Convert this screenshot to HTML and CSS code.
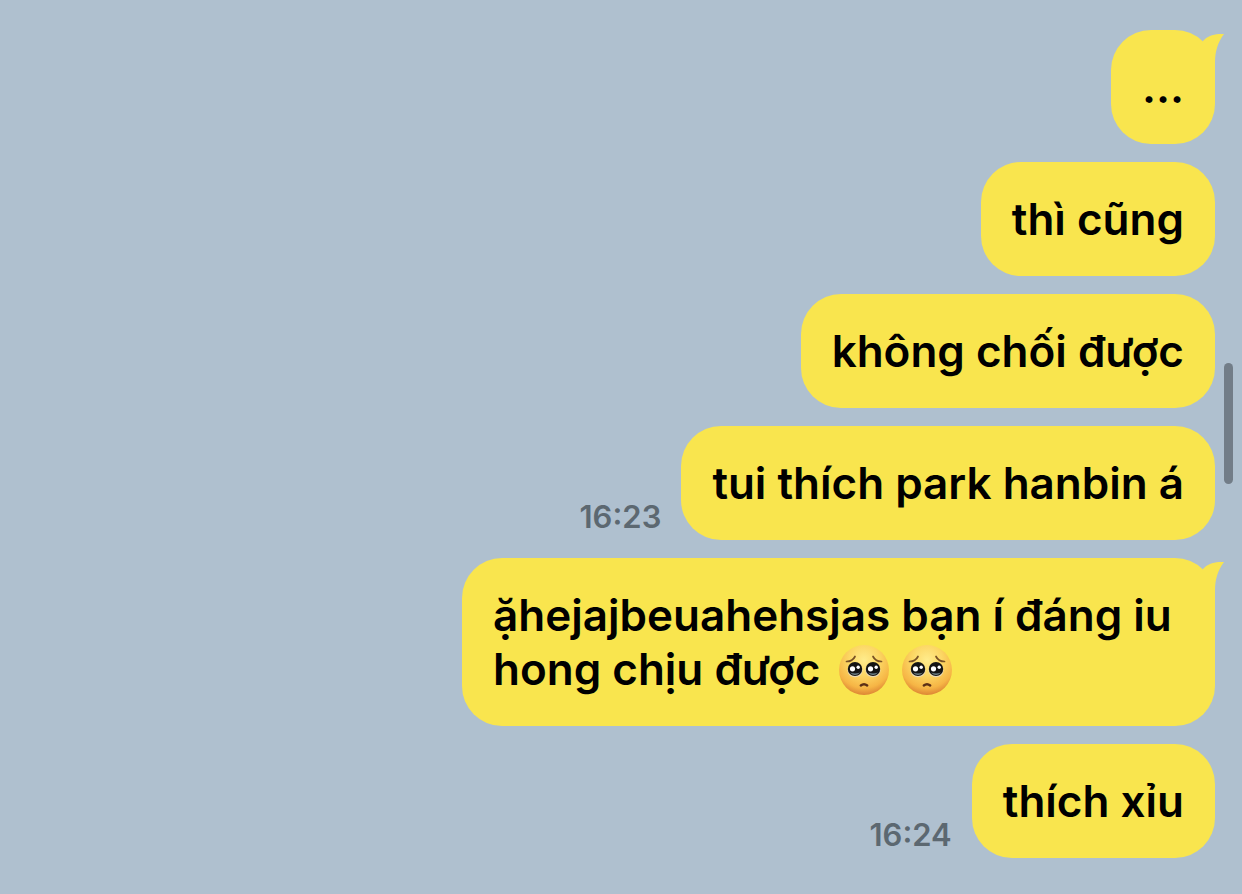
FILE: index.html
```html
<!DOCTYPE html>
<html lang="vi">
<head>
<meta charset="utf-8">
<meta name="viewport" content="width=device-width, initial-scale=1">
<title>Chat</title>
<link rel="stylesheet" href="styles.css">
</head>
<body>
<svg class="defs" width="0" height="0" aria-hidden="true">
  <defs>
    <radialGradient id="face" cx="50%" cy="30%" r="70%">
      <stop offset="0" stop-color="#ffec8c"/>
      <stop offset="0.45" stop-color="#fcd663"/>
      <stop offset="0.8" stop-color="#f6b545"/>
      <stop offset="1" stop-color="#dd8634"/>
    </radialGradient>
    <symbol id="pleading" viewBox="0 0 50 50">
      <circle cx="25" cy="25" r="25" fill="url(#face)"/>
      <ellipse cx="16" cy="25.500" rx="7.500" ry="6.800" fill="#ead9b4"/>
      <ellipse cx="34" cy="25.500" rx="7.500" ry="6.800" fill="#ead9b4"/>
      <ellipse cx="16" cy="24" rx="7.200" ry="7" fill="#141414"/>
      <ellipse cx="34" cy="24" rx="7.200" ry="7" fill="#141414"/>
      <path d="M11 27.500q5 5 10 0q-5 2-10 0M29 27.500q5 5 10 0q-5 2-10 0" fill="#71848c"/>
      <circle cx="13.500" cy="23.800" r="2.600" fill="#fff"/>
      <circle cx="19.200" cy="22.200" r="1.700" fill="#fff"/>
      <circle cx="31.500" cy="23.800" r="2.600" fill="#fff"/>
      <circle cx="37.200" cy="22.200" r="1.700" fill="#fff"/>
      <path d="M7.500 16.500Q13.500 16.500 16 11.500M42.500 16.500Q36.500 16.500 34 11.500" fill="none" stroke="#795124" stroke-width="1.700" stroke-linecap="round"/>
      <path d="M21.800 40.500Q25 37.800 28.200 40.500" fill="none" stroke="#5c2f16" stroke-width="2.400" stroke-linecap="round"/>
    </symbol>
    <symbol id="tail" viewBox="0 0 24 40">
      <path d="M24 0C15 -0.500 8 1.500 3 7L3 40H15V28C15 17 18 8 24 0Z" fill="#f9e54e"/>
    </symbol>
  </defs>
</svg>
<main class="chat">
  <div class="message">
    <p class="bubble">…<svg class="tail" aria-hidden="true"><use href="#tail"/></svg></p>
  </div>
  <div class="message">
    <p class="bubble">thì cũng</p>
  </div>
  <div class="message">
    <p class="bubble">không chối được</p>
  </div>
  <div class="message">
    <time class="time" datetime="16:23">16:23</time>
    <p class="bubble">tui thích park hanbin á</p>
  </div>
  <div class="message">
    <p class="bubble">ặhejajbeuahehsjas bạn í đáng iu hong chịu được <svg class="emoji" role="img" aria-label="pleading face"><use href="#pleading"/></svg><svg class="emoji" role="img" aria-label="pleading face"><use href="#pleading"/></svg><svg class="tail" aria-hidden="true"><use href="#tail"/></svg></p>
  </div>
  <div class="message">
    <time class="time" datetime="16:24">16:24</time>
    <p class="bubble">thích xỉu</p>
  </div>
</main>
<div class="scroll-thumb"></div>
</body>
</html>
```
FILE: styles.css
```css
* {
  box-sizing: border-box;
}

body {
  margin: 0;
  min-height: 100vh;
  background: #afc0cf;
  color: #000;
  font-family: Inter, "Noto Sans", sans-serif;
}

.defs {
  position: absolute;
}

.chat {
  display: flex;
  flex-direction: column;
  gap: 18px;
  padding: 30px 27px 36px;
}

.message {
  display: flex;
  justify-content: flex-end;
  align-items: flex-end;
  gap: 20px;
}

.bubble {
  position: relative;
  max-width: 753px;
  margin: 0;
  padding: 30px 31px;
  border-radius: 40px;
  background: #f9e54e;
  font-size: 44px;
  font-weight: 600;
  line-height: 54px;
}

.tail {
  position: absolute;
  top: 4px;
  right: -9px;
  width: 24px;
  height: 40px;
}

.emoji {
  width: 50px;
  height: 50px;
  margin: 0 6px 0 7px;
  vertical-align: -10px;
}

.time {
  padding-bottom: 4px;
  color: #5c6871;
  font-size: 31px;
  font-weight: 600;
  line-height: 38px;
}

.scroll-thumb {
  position: fixed;
  top: 363px;
  right: 9px;
  width: 9px;
  height: 121px;
  border-radius: 5px;
  background: #727d88;
}
```
